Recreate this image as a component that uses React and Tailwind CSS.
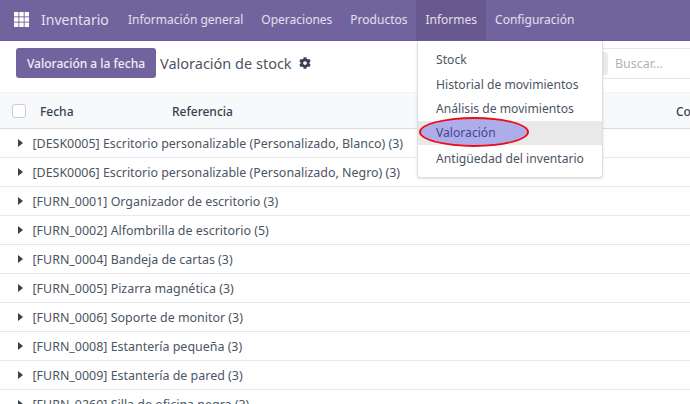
import React from 'react'

const navItems = ['Información general', 'Operaciones', 'Productos', 'Informes', 'Configuración']
const menuItems = ['Stock', 'Historial de movimientos', 'Análisis de movimientos', 'Valoración', 'Antigüedad del inventario']
const rows = [
  '[DESK0005] Escritorio personalizable (Personalizado, Blanco) (3)',
  '[DESK0006] Escritorio personalizable (Personalizado, Negro) (3)',
  '[FURN_0001] Organizador de escritorio (3)',
  '[FURN_0002] Alfombrilla de escritorio (5)',
  '[FURN_0004] Bandeja de cartas (3)',
  '[FURN_0005] Pizarra magnética (3)',
  '[FURN_0006] Soporte de monitor (3)',
  '[FURN_0008] Estantería pequeña (3)',
  '[FURN_0009] Estantería de pared (3)',
  '[FURN_0269] Silla de oficina negra (3)',
]

function GridIcon() {
  return (
    <svg width="15" height="15" viewBox="0 0 15 15" fill="#fff">
      {[0, 5.3, 10.6].map((y) =>
        [0, 5.3, 10.6].map((x) => <rect key={`${x}-${y}`} x={x} y={y} width="4.4" height="4.4" />)
      )}
    </svg>
  )
}

function Gear() {
  return (
    <svg width="12" height="12" viewBox="0 0 512 512" fill="#374151">
      <path d="M487.4 315.7l-42.6-24.6c4.3-23.2 4.3-47 0-70.2l42.6-24.6c4.9-2.8 7.1-8.6 5.5-14-11.1-35.6-30-67.8-54.7-94.6-3.8-4.1-10-5.1-14.8-2.3L380.8 110c-17.9-15.4-38.5-27.3-60.8-35.1V25.8c0-5.6-3.9-10.5-9.4-11.7-36.7-8.2-74.3-7.8-109.2 0-5.5 1.2-9.4 6.1-9.4 11.7V75c-22.2 7.9-42.8 19.8-60.8 35.1L88.7 85.5c-4.9-2.8-11-1.9-14.8 2.3-24.7 26.7-43.6 58.9-54.7 94.6-1.7 5.4.6 11.2 5.5 14L67.3 221c-4.3 23.2-4.3 47 0 70.2l-42.6 24.6c-4.9 2.8-7.1 8.6-5.5 14 11.1 35.6 30 67.8 54.7 94.6 3.8 4.1 10 5.1 14.8 2.3l42.6-24.6c17.9 15.4 38.5 27.3 60.8 35.1v49.2c0 5.6 3.9 10.5 9.4 11.7 36.7 8.2 74.3 7.8 109.2 0 5.5-1.2 9.4-6.1 9.4-11.7v-49.2c22.2-7.9 42.8-19.8 60.8-35.1l42.6 24.6c4.9 2.8 11 1.9 14.8-2.3 24.7-26.7 43.6-58.9 54.7-94.6 1.5-5.5-.7-11.3-5.6-14.1zM256 336c-44.1 0-80-35.9-80-80s35.9-80 80-80 80 35.9 80 80-35.9 80-80 80z" />
    </svg>
  )
}

export default function App() {
  return (
    <div className="relative h-[404px] w-[690px] overflow-hidden bg-white text-[12.45px] text-[#4b5563]" style={{ fontFamily: '"Noto Sans", sans-serif' }}>
      <header className="flex h-[41px] items-center border-b border-[#6a5c96] bg-[#71639e] text-[12px] text-white/80">
        <div className="ml-[14px] mr-[12px] mb-[2px]"><GridIcon /></div>
        <span className="mr-[10px] mb-[1px] w-[68px] whitespace-nowrap text-[14px]">Inventario</span>
        {navItems.map((item) => (
          <span key={item} className={`flex h-full items-center px-[9px] ${item === 'Informes' ? 'bg-[#67598f]' : ''}`}>{item}</span>
        ))}
      </header>

      <div className="flex h-[52px] items-start border-b border-[#f1f3f5] pl-4 pt-[7px]">
        <button className="h-[30px] w-[140px] rounded-[3px] bg-[#71639e] pt-[1px] text-[12px] font-medium text-white/90">Valoración a la fecha</button>
        <div className="flex h-[30px] items-center">
          <span className="ml-[4px] pt-[1px] text-[14.5px]">Valoración de stock</span>
          <span className="ml-[7px] mb-[1px]"><Gear /></span>
        </div>
        <div className="ml-auto flex h-[31px] w-[105px] items-center border-y border-[#e5e7eb]">
          <span className="h-[23px] w-[23px] rounded-[3px] bg-[#e9ecef]" />
          <span className="ml-[7px] pt-[2px] text-[#adb2ba]">Buscar...</span>
        </div>
      </div>

      <div className="flex h-[36px] items-center justify-between border-b border-[#d8dadd] bg-[#f8f9fa] text-[12px] font-medium text-[#374151]">
        <div className="flex items-center">
          <span className="ml-3 h-[14px] w-[14px] rounded-[3px] border border-[#c9ccd2] bg-white" />
          <span className="ml-[14px] w-[132px] pt-[2px]">Fecha</span>
          <span className="pt-[2px]">Referencia</span>
        </div>
        <span className="w-[14px] overflow-hidden pt-[2px]">Co</span>
      </div>

      {rows.map((row) => (
        <div key={row} className="flex h-[29px] items-center border-b border-[#e7e9ed]">
          <span className="ml-[18px] h-0 w-0 border-y-[4px] border-l-[5px] border-y-transparent border-l-[#374151]" />
          <span className="ml-[9.5px] whitespace-nowrap pt-[2px]">{row}</span>
        </div>
      ))}

      <div className="absolute left-[417px] top-[41px] h-[137px] w-[186px] rounded-b-[3px] border border-t-0 border-[#dcdfe3] bg-white py-[6px] text-[12.15px] shadow-sm">
        {menuItems.map((item) => (
          <div key={item} className={`flex h-[24.6px] items-center pl-[18px] pt-[2px] ${item === 'Valoración' ? 'bg-[#e9e9e9]' : ''}`}>{item === 'Valoración' ? '' : item}</div>
        ))}
      </div>
      <div className="absolute left-[419px] top-[117px] flex h-[30px] w-[110px] items-center rounded-[50%] border-[2.5px] border-[#f00a14] bg-[#adadea] pl-[15px] pt-[3px] text-[12.15px] text-[#45458a]">
        Valoración
      </div>
    </div>
  )
}
